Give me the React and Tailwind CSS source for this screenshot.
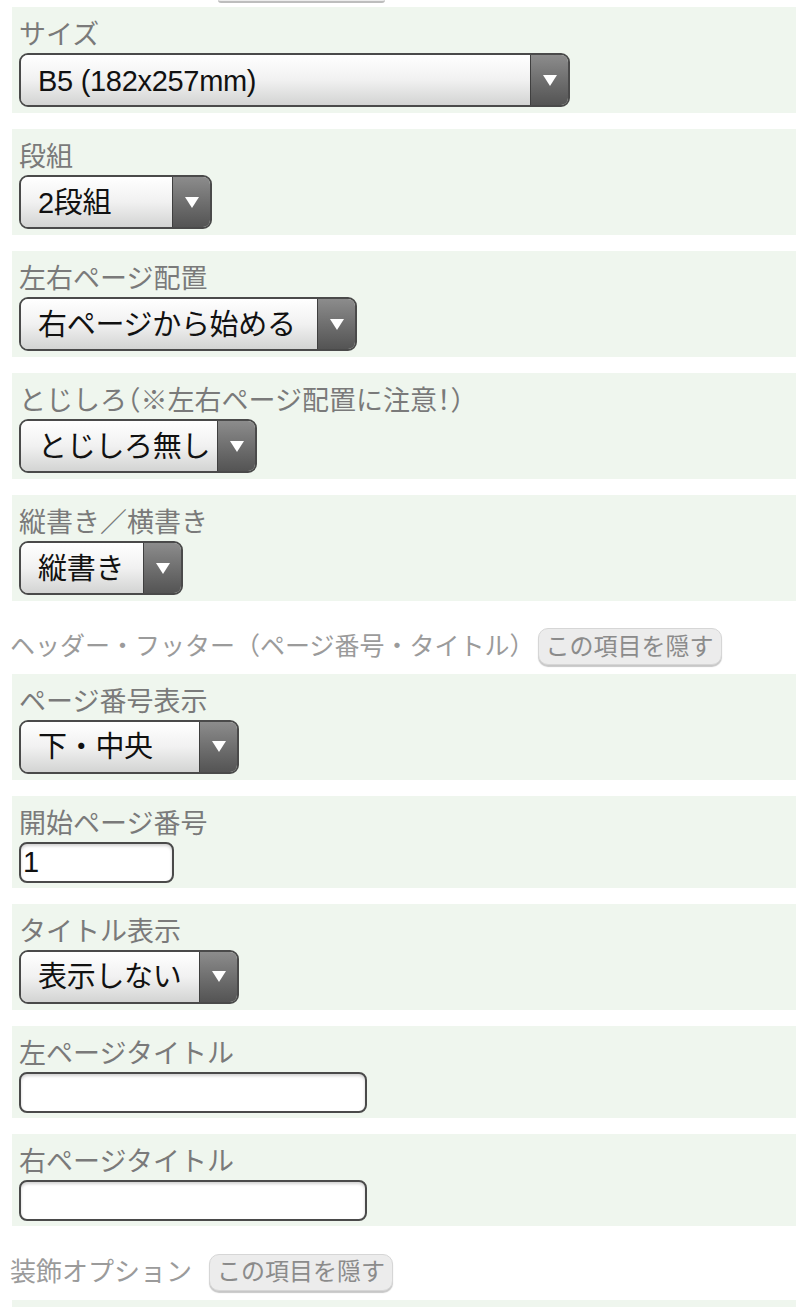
import React from 'react'

// small dark arrow cap used on every select
function Arrow() {
  return (
    <div className="flex h-full w-[38px] shrink-0 items-center justify-center border-l border-[#3f3f3f] bg-gradient-to-b from-[#8c8c8c] to-[#545454]">
      <svg width="14" height="11" viewBox="0 0 14 11">
        <polygon points="0,0 14,0 7,11" fill="#ffffff" />
      </svg>
    </div>
  )
}

function Select({ value, width }) {
  return (
    <div className={`flex h-[54px] overflow-hidden rounded-[9px] border-2 border-[#4a4a4a] ${width}`}>
      <div className="flex flex-1 items-center bg-gradient-to-b from-white via-[#f1f1f1] to-[#d3d4d3] pl-[17px] pt-[3px] text-[29px] tracking-[-0.3px] text-[#111] whitespace-nowrap">
        {value}
      </div>
      <Arrow />
    </div>
  )
}

function TextInput({ value, width }) {
  return (
    <div className={`flex h-[41px] items-center rounded-[8px] border-2 border-[#4a4a4a] bg-white pl-[2px] pt-[2px] text-[29px] text-[#111] shadow-[inset_0_2px_3px_rgba(0,0,0,0.18)] ${width}`}>
      {value}
    </div>
  )
}

function Panel({ label, labelClass = '', bottom = 'pb-[6px]', children }) {
  return (
    <div className={`mb-[16px] ml-[12px] w-[784px] bg-[#eff6ee] pl-[7px] pt-[10px] ${bottom}`}>
      <div className={`h-[36px] text-[27px] leading-[36px] text-[#7a7a7a] whitespace-nowrap ${labelClass}`}>{label}</div>
      {children}
    </div>
  )
}

function HideButton() {
  return (
    <div className="flex h-[37px] items-center rounded-[10px] border border-[#d6d6d6] bg-[#ececec] px-[7px] text-[24px] text-[#8b8b8b] shadow-[0_2px_1px_rgba(0,0,0,0.22)]">
      この項目を隠す
    </div>
  )
}

function SectionHeader({ title, titleClass, gap }) {
  return (
    <div className={`flex items-center pl-[10px] pt-[11px] pb-[8px] ${gap}`}>
      <div className={`text-[#9b9b9b] whitespace-nowrap ${titleClass}`}>{title}</div>
      <HideButton />
    </div>
  )
}

export default function App() {
  return (
    <div className="h-[1307px] w-[800px] overflow-hidden bg-white font-['Liberation_Sans','Noto_Sans_CJK_JP',sans-serif]">
      {/* bottom edge of the previous section's button */}
      <div className="mb-[4px] ml-[218px] h-[3px] w-[167px] rounded-b-[10px] border-b-2 border-[#bdbdbd] bg-[#ececec]"></div>

      <Panel label="サイズ">
        <Select value="B5 (182x257mm)" width="w-[551px]" />
      </Panel>
      <Panel label="段組">
        <Select value="2段組" width="w-[193px]" />
      </Panel>
      <Panel label="左右ページ配置">
        <Select value="右ページから始める" width="w-[338px]" />
      </Panel>
      <Panel label="とじしろ（※左右ページ配置に注意！）" labelClass="[font-feature-settings:'halt']">
        <Select value="とじしろ無し" width="w-[238px]" />
      </Panel>
      <Panel label="縦書き／横書き">
        <Select value="縦書き" width="w-[164px]" />
      </Panel>

      <SectionHeader title="ヘッダー・フッター（ページ番号・タイトル）" titleClass="text-[25px]" gap="gap-[3px]" />

      <Panel label="ページ番号表示">
        <Select value="下・中央" width="w-[220px]" />
      </Panel>
      <Panel label="開始ページ番号" bottom="pb-[5px]">
        <TextInput value="1" width="w-[155px]" />
      </Panel>
      <Panel label="タイトル表示">
        <Select value="表示しない" width="w-[220px]" />
      </Panel>
      <Panel label="左ページタイトル" bottom="pb-[5px]">
        <TextInput value="" width="w-[348px]" />
      </Panel>
      <Panel label="右ページタイトル" bottom="pb-[5px]">
        <TextInput value="" width="w-[348px]" />
      </Panel>

      <SectionHeader title="装飾オプション" titleClass="text-[26px]" gap="gap-[17px]" />

      <div className="ml-[12px] h-[40px] w-[784px] bg-[#eff6ee]"></div>
    </div>
  )
}
